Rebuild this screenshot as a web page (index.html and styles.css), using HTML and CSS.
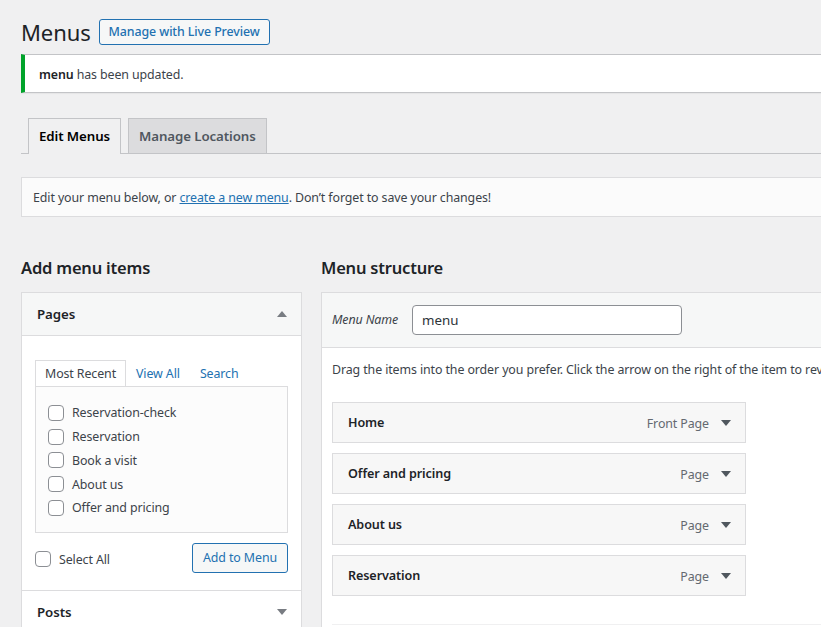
FILE: index.html
```html
<!DOCTYPE html>
<html lang="en">
	<head>
		<meta charset="UTF-8" />
		<title>Menus</title>
		<link rel="stylesheet" href="styles.css">
	</head>
	<body>
		<div class="wrap">
			<div class="page-head">
				<h1>Menus</h1>
				<a class="button-outline" href="#">Manage with Live Preview</a>
			</div>

			<div class="notice">
				<p><strong>menu</strong> has been updated.</p>
			</div>

			<nav class="nav-tabs">
				<a class="nav-tab active" href="#">Edit Menus</a>
				<a class="nav-tab" href="#">Manage Locations</a>
			</nav>

			<div class="manage-menus">
				Edit your menu below, or <a href="#">create a new menu</a>. Don’t forget to save your changes!
			</div>

			<div class="columns">
				<div class="col-left">
					<h2>Add menu items</h2>
					<div class="accordion">
						<div class="acc-section">
							<div class="acc-title">
								Pages
								<svg class="arrow" width="10" height="6" viewBox="0 0 10 6"><polygon points="5,0 10,6 0,6" /></svg>
							</div>
							<div class="acc-body">
								<ul class="tabs">
									<li class="tab active">Most Recent</li>
									<li class="tab"><a href="#">View All</a></li>
									<li class="tab"><a href="#">Search</a></li>
								</ul>
								<div class="tab-panel">
									<label class="check"><input type="checkbox"> Reservation-check</label>
									<label class="check"><input type="checkbox"> Reservation</label>
									<label class="check"><input type="checkbox"> Book a visit</label>
									<label class="check"><input type="checkbox"> About us</label>
									<label class="check"><input type="checkbox"> Offer and pricing</label>
								</div>
								<div class="acc-actions">
									<label class="check"><input type="checkbox"> Select All</label>
									<button class="button-outline add">Add to Menu</button>
								</div>
							</div>
						</div>
						<div class="acc-section">
							<div class="acc-title closed">
								Posts
								<svg class="arrow" width="10" height="6" viewBox="0 0 10 6"><polygon points="0,0 10,0 5,6" /></svg>
							</div>
						</div>
					</div>
				</div>

				<div class="col-right">
					<h2>Menu structure</h2>
					<div class="menu-edit">
						<div class="menu-header">
							<label class="menu-name-label">Menu Name</label>
							<input class="menu-name" type="text" value="menu">
						</div>
						<div class="menu-body">
							<p class="drag-help">Drag the items into the order you prefer. Click the arrow on the right of the item to reveal additional configuration options.</p>
							<ul class="menu-items">
								<li class="menu-item">
									<span class="item-title">Home</span>
									<span class="item-type">Front Page</span>
									<svg class="item-arrow" width="10" height="6" viewBox="0 0 10 6"><polygon points="0,0 10,0 5,6" /></svg>
									<span class="item-edit">Edit</span>
								</li>
								<li class="menu-item">
									<span class="item-title">Offer and pricing</span>
									<span class="item-type">Page</span>
									<svg class="item-arrow" width="10" height="6" viewBox="0 0 10 6"><polygon points="0,0 10,0 5,6" /></svg>
									<span class="item-edit">Edit</span>
								</li>
								<li class="menu-item">
									<span class="item-title">About us</span>
									<span class="item-type">Page</span>
									<svg class="item-arrow" width="10" height="6" viewBox="0 0 10 6"><polygon points="0,0 10,0 5,6" /></svg>
									<span class="item-edit">Edit</span>
								</li>
								<li class="menu-item">
									<span class="item-title">Reservation</span>
									<span class="item-type">Page</span>
									<svg class="item-arrow" width="10" height="6" viewBox="0 0 10 6"><polygon points="0,0 10,0 5,6" /></svg>
									<span class="item-edit">Edit</span>
								</li>
							</ul>
							<div class="menu-settings"></div>
						</div>
					</div>
				</div>
			</div>
		</div>
	</body>
</html>
```

FILE: styles.css
```css
html {
	overflow: hidden;
}

body {
	margin: 0;
	background-color: #f0f0f1;
	color: #3c434a;
	font-family: "Noto Sans", "Open Sans", sans-serif;
	font-size: 12.4px;
	letter-spacing: -0.1px;
	line-height: 1.4;
}

a {
	color: #2271b1;
}

.wrap {
	width: 1080px;
	padding-left: 21px;
}

.page-head {
	display: flex;
	align-items: center;
	gap: 8px;
	height: 30px;
	padding-top: 17px;
}

h1 {
	margin: 0;
	font-size: 22px;
	font-weight: 400;
	color: #1d2327;
}

.button-outline {
	display: inline-flex;
	align-items: center;
	height: 26px;
	padding: 0 9px;
	box-sizing: border-box;
	border: 1px solid #2271b1;
	border-radius: 3px;
	background-color: #f6f7f7;
	color: #2271b1;
	font-family: inherit;
	font-size: 12.4px;
	letter-spacing: -0.1px;
	font-weight: 500;
	text-decoration: none;
}

.notice {
	margin-top: 7px;
	background-color: #fff;
	border: 1px solid #c3c4c7;
	border-left: 4px solid #00a32a;
	box-shadow: 0 1px 1px rgba(0, 0, 0, 0.04);
	padding: 0 14px;
}

.notice p {
	margin: 0;
	height: 37px;
	line-height: 39px;
}

.notice strong {
	font-weight: 600;
	color: #1d2327;
}

.nav-tabs {
	display: flex;
	gap: 7px;
	margin-top: 25px;
	padding-left: 7px;
	border-bottom: 1px solid #c3c4c7;
}

.nav-tab {
	display: block;
	height: 34px;
	line-height: 35px;
	padding: 0 10px;
	margin-bottom: -1px;
	border: 1px solid #c3c4c7;
	border-bottom: none;
	background-color: #dcdcde;
	color: #50575e;
	font-size: 13.3px;
	font-weight: 600;
	text-decoration: none;
}

.nav-tab.active {
	height: 35px;
	background-color: #f0f0f1;
	color: #000;
}

.manage-menus {
	margin-top: 23px;
	height: 38px;
	line-height: 39px;
	padding: 0 11px;
	background-color: #fbfbfb;
	border: 1px solid #dcdcde;
}

.columns {
	display: flex;
	gap: 19px;
	margin-top: 38px;
}

h2 {
	margin: 0 0 12px;
	font-size: 16.5px;
	letter-spacing: -0.2px;
	font-weight: 600;
	line-height: 25px;
	color: #1d2327;
}

.col-left {
	width: 281px;
	flex-shrink: 0;
}

.col-right {
	flex: 1;
}

.accordion {
	border: 1px solid #dcdcde;
	border-bottom: none;
	background-color: #fff;
}

.acc-title {
	display: flex;
	align-items: center;
	justify-content: space-between;
	height: 42px;
	padding: 0 14px 0 15px;
	background-color: #f6f7f7;
	border-bottom: 1px solid #dcdcde;
	color: #1d2327;
	font-size: 13.3px;
	font-weight: 600;
}

.acc-title.closed {
	background-color: #fff;
}

.arrow {
	fill: #787c82;
}

.acc-body {
	padding: 24px 13px 17px;
	border-bottom: 1px solid #dcdcde;
}

.tabs {
	display: flex;
	list-style: none;
	margin: 0;
	padding: 0;
}

.tab {
	height: 25px;
	line-height: 26px;
	padding: 0 9px;
	border: 1px solid transparent;
	border-bottom: none;
}

.tab a {
	text-decoration: none;
}

.tab.active {
	border-color: #dcdcde;
	background-color: #fff;
	margin-bottom: -1px;
	position: relative;
}

.tab-panel {
	display: flex;
	flex-direction: column;
	padding: 14px 12px 12px;
	border: 1px solid #dcdcde;
	background-color: #fcfcfc;
}

.check {
	display: flex;
	align-items: center;
	gap: 8px;
	height: 23.8px;
}

.check input {
	appearance: none;
	width: 16px;
	height: 16px;
	margin: 0;
	border: 1px solid #8c8f94;
	border-radius: 4px;
	background-color: #fff;
}

.acc-actions {
	display: flex;
	align-items: center;
	justify-content: space-between;
	margin-top: 10px;
}

.acc-actions .check {
	margin-top: 3px;
}

.button-outline.add {
	height: 30px;
	padding: 0 10px;
	font-weight: 400;
}

.menu-edit {
	border: 1px solid #dcdcde;
	background-color: #fff;
}

.menu-header {
	display: flex;
	align-items: center;
	gap: 14px;
	height: 54px;
	padding: 0 10px;
	background-color: #f6f7f7;
	border-bottom: 1px solid #dcdcde;
}

.menu-name-label {
	font-style: italic;
}

.menu-name {
	width: 270px;
	height: 30px;
	box-sizing: border-box;
	padding: 0 9px;
	border: 1px solid #8c8f94;
	border-radius: 4px;
	font-family: inherit;
	font-size: 13.3px;
	color: #2c3338;
}

.menu-body {
	padding: 0 10px;
}

.drag-help {
	margin: 13px 0 0;
	white-space: nowrap;
}

.menu-items {
	list-style: none;
	margin: 24px 0 0;
	padding: 0;
	display: flex;
	flex-direction: column;
	gap: 10px;
}

.menu-item {
	position: relative;
	overflow: hidden;
	display: flex;
	align-items: center;
	width: 414px;
	height: 41px;
	box-sizing: border-box;
	padding: 0 14px 0 15px;
	border: 1px solid #dcdcde;
	background-color: #f7f7f7;
}

.item-title {
	flex: 1;
	color: #1d2327;
	font-size: 12.6px;
	font-weight: 600;
}

.item-type {
	color: #646970;
	font-size: 12.4px;
	margin-right: 12px;
	padding-top: 2px;
}

.item-arrow {
	fill: #50575e;
}

.item-edit {
	position: absolute;
	right: 10px;
	bottom: -11px;
	font-size: 11px;
	color: #a7aaad;
}

.menu-settings {
	margin-top: 28px;
	border-top: 1px solid #f0f0f1;
	height: 20px;
}
```
